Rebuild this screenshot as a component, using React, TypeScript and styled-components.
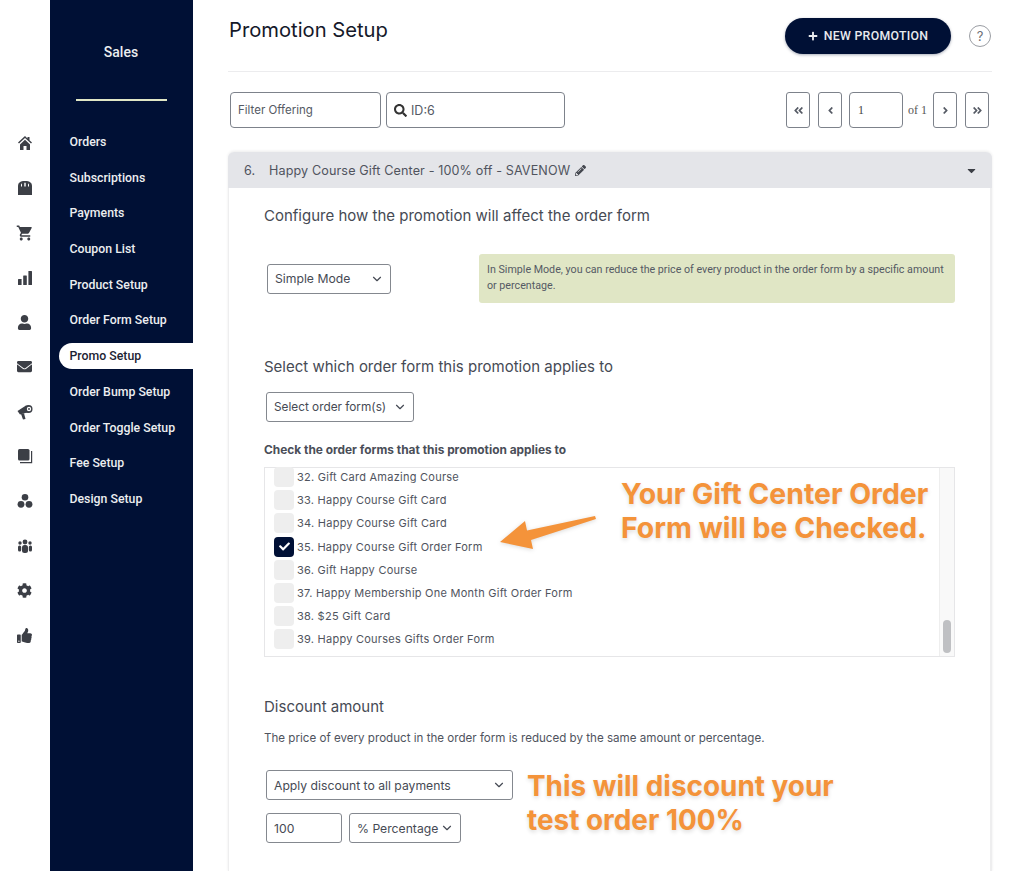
import React from 'react';
import styled, { createGlobalStyle } from 'styled-components';
import {
  FaAngleDoubleLeft,
  FaAngleDoubleRight,
  FaAngleLeft,
  FaAngleRight,
  FaCaretDown,
  FaCheck,
  FaCog,
  FaEnvelope,
  FaPencilAlt,
  FaPlus,
  FaSearch,
  FaThumbsUp,
  FaUser,
} from 'react-icons/fa';
import { MdShoppingCart } from 'react-icons/md';
import { ChevronDown } from 'lucide-react';

const GlobalStyle = createGlobalStyle`
  html, body {
    margin: 0;
    padding: 0;
    height: 871px;
    overflow: hidden;
    background: #fff;
    font-family: Inter, "Liberation Sans", sans-serif;
    color: #3f4450;
  }
  * { box-sizing: border-box; }
`;

const Page = styled.div`
  display: flex;
  width: 1024px;
  height: 871px;
  overflow: hidden;
`;

const Rail = styled.nav`
  width: 49.5px;
  flex: none;
  padding-top: 132px;
  display: flex;
  flex-direction: column;
  align-items: center;
  color: #3c3f46;
`;

const RailIcon = styled.div`
  height: 44.72px;
  width: 100%;
  padding-bottom: 22px;
  display: flex;
  align-items: center;
  justify-content: center;
  font-size: 15px;
`;

const Sidebar = styled.aside`
  width: 143px;
  flex: none;
  background: #001035;
  color: #eceef0;
  font-family: Roboto, "Liberation Sans", sans-serif;
`;

const SidebarTitle = styled.div`
  height: 101px;
  margin: 0 26px 0 26px;
  padding-top: 44px;
  text-align: center;
  font-size: 14px;
  line-height: 17px;
  font-weight: 500;
  border-bottom: 2px solid #e0e6c5;
`;

const SideList = styled.ul`
  list-style: none;
  margin: 28px 0 0;
  padding: 0;
`;

const SideItem = styled.li<{ $active?: boolean }>`
  height: 26px;
  margin: 0 0 9.7px 9px;
  padding-left: 11px;
  display: flex;
  align-items: center;
  font-size: 12.3px;
  font-weight: 500;
  border-radius: 13px 0 0 13px;
  background: ${(p) => (p.$active ? '#fff' : 'transparent')};
  color: ${(p) => (p.$active ? '#1c2333' : '#eceef0')};
`;

const Main = styled.main`
  width: 764px;
  margin-left: 35.5px;
  flex: none;
`;

const TopBar = styled.header`
  height: 72px;
  padding-top: 18px;
  display: flex;
  align-items: flex-start;
  justify-content: space-between;
  border-bottom: 1px solid #ececee;
`;

const Title = styled.h1`
  margin: 0 0 0 1px;
  font-size: 20.2px;
  line-height: 24px;
  font-weight: 400;
  color: #15192a;
`;

const TopActions = styled.div`
  display: flex;
  align-items: center;
  gap: 18px;
`;

const NewButton = styled.button`
  width: 166px;
  height: 36px;
  border: 0;
  border-radius: 18px;
  background: #001035;
  color: #e8eaee;
  display: flex;
  align-items: center;
  justify-content: center;
  gap: 6px;
  font-family: Roboto, "Liberation Sans", sans-serif;
  font-size: 12.3px;
  font-weight: 500;
  letter-spacing: 0.3px;
  box-shadow: 0 1px 3px rgba(0, 16, 53, 0.35);
`;

const HelpCircle = styled.div`
  width: 22px;
  height: 22px;
  margin-right: 1px;
  border: 1px solid #9a9da3;
  border-radius: 50%;
  display: flex;
  align-items: center;
  justify-content: center;
  font-size: 13px;
  color: #6d7076;
`;

const Toolbar = styled.div`
  margin-top: 20px;
  padding: 0 3px 0 2px;
  height: 36px;
  display: flex;
  justify-content: space-between;
`;

const FilterGroup = styled.div`
  display: flex;
  gap: 5px;
`;

const Field = styled.div<{ $width: number; $size?: number }>`
  width: ${(p) => p.$width}px;
  height: 36px;
  padding: 0 7px;
  display: flex;
  align-items: center;
  gap: 4px;
  border: 1px solid #7d828b;
  border-radius: 4px;
  font-size: ${(p) => p.$size ?? 11.5}px;
  color: #555a64;
`;

const Pager = styled.div`
  display: flex;
  align-items: center;
`;

const PageButton = styled.div<{ $gap?: number }>`
  width: 24px;
  height: 36px;
  margin-right: ${(p) => p.$gap ?? 0}px;
  border: 1px solid #7d828b;
  border-radius: 3px;
  display: flex;
  align-items: center;
  justify-content: center;
  font-size: 11px;
  color: #555a64;
`;

const PageInput = styled.div`
  width: 54px;
  height: 36px;
  padding-left: 8px;
  border: 1px solid #7d828b;
  border-radius: 4px;
  display: flex;
  align-items: center;
  font-family: "Liberation Serif", serif;
  font-size: 12px;
  color: #444;
`;

const PageOf = styled.span`
  width: 30px;
  padding-left: 5px;
  font-family: "Liberation Serif", serif;
  font-size: 12px;
  color: #555;
`;

const Card = styled.section`
  margin-top: 24px;
  height: 720px;
  border-radius: 6px 6px 0 0;
  border-left: 1px solid #eeeeef;
  border-right: 2px solid #eeeeef;
  box-shadow: 0 -1px 3px rgba(0, 0, 0, 0.08);
`;

const CardHead = styled.div`
  height: 36px;
  margin: 0 -2px 0 -1px;
  padding: 0 14px 0 16px;
  display: flex;
  align-items: center;
  background: #e4e5e9;
  border-radius: 6px 6px 0 0;
  font-size: 12.6px;
  color: #50545e;
`;

const CardNumber = styled.span`
  width: 25px;
`;

const CardName = styled.span`
  flex: 1;
  display: flex;
  align-items: center;
  gap: 5px;
  letter-spacing: 0.12px;
`;

const CardBody = styled.div`
  padding: 18px 35px 0 35px;
`;

const SectionTitle = styled.h2<{ $top?: number }>`
  margin: ${(p) => p.$top ?? 0}px 0 0;
  font-size: 15px;
  line-height: 20px;
  font-weight: 400;
  color: #464a54;
`;

const ModeRow = styled.div`
  margin-top: 28px;
  height: 49px;
  display: flex;
  align-items: center;
`;

const SelectBox = styled.div<{ $width: number; $left?: number; $top?: number; $size?: number }>`
  width: ${(p) => p.$width}px;
  height: 30px;
  margin: ${(p) => p.$top ?? 0}px 0 0 ${(p) => p.$left ?? 0}px;
  padding: 0 6px 0 7px;
  flex: none;
  display: flex;
  align-items: center;
  justify-content: space-between;
  background: #fff;
  border: 1px solid #84888f;
  border-radius: 3px;
  font-size: ${(p) => p.$size ?? 12.2}px;
  color: #464a54;
`;

const Note = styled.div`
  width: 476px;
  height: 49px;
  margin-left: 88px;
  padding: 8px 8px;
  background: #e0e6c5;
  border-radius: 3px;
  font-family: Roboto, "Liberation Sans", sans-serif;
  font-size: 10.7px;
  line-height: 16px;
  color: #555a64;
`;

const ListLabel = styled.div`
  margin-top: 21px;
  font-size: 11.9px;
  line-height: 14px;
  font-weight: 700;
  color: #4a4e58;
`;

const ListFrame = styled.div`
  position: relative;
  margin-top: 10px;
  height: 190px;
  display: flex;
  border: 1px solid #e6e6e8;
`;

const Rows = styled.div`
  flex: 1;
  margin-top: -2.5px;
  padding-left: 9px;
  display: grid;
  grid-auto-rows: 23.2px;
  overflow: hidden;
`;

const Row = styled.label`
  display: flex;
  align-items: center;
  gap: 3px;
  font-size: 11px;
  letter-spacing: 0.25px;
  color: #50545e;
`;

const Check = styled.span<{ $on?: boolean }>`
  width: 20px;
  height: 20px;
  flex: none;
  display: flex;
  align-items: center;
  justify-content: center;
  border-radius: 4px;
  background: ${(p) => (p.$on ? '#001035' : '#eeeeee')};
  color: #fff;
  font-size: 11px;
`;

const ScrollTrack = styled.div`
  width: 15px;
  flex: none;
  padding: 0 3px 3px;
  display: flex;
  align-items: flex-end;
  background: #f9f9f9;
  border-left: 1px solid #eeeeee;
`;

const ScrollThumb = styled.div`
  width: 8px;
  height: 33px;
  border-radius: 4px;
  background: #bfc0c3;
`;

const Callout = styled.div<{ $size: number }>`
  font-size: ${(p) => p.$size}px;
  line-height: 34px;
  font-weight: 700;
  color: #f4933a;
  text-shadow: 0 2px 4px rgba(0, 0, 0, 0.14);
`;

const ListCallout = styled(Callout)`
  position: absolute;
  left: 356px;
  top: 9px;
`;

const DiscountCallout = styled(Callout)`
  margin-top: -1px;
`;

const Arrow = styled.svg`
  position: absolute;
  left: 234px;
  top: 45px;
  width: 100px;
  height: 40px;
  overflow: visible;
  filter: drop-shadow(0 1px 2px rgba(0, 0, 0, 0.15));
`;

const Hint = styled.p`
  margin: 13px 0 0;
  font-size: 11.6px;
  line-height: 16px;
  color: #50545e;
`;

const DiscountRow = styled.div`
  margin-top: 24px;
  display: flex;
  align-items: flex-start;
  gap: 14px;
`;

const DiscountControls = styled.div`
  width: 249px;
  flex: none;
`;

const AmountRow = styled.div`
  margin: 13px 0 0 2px;
  display: flex;
  gap: 7px;
`;

const AmountInput = styled.div`
  width: 76px;
  height: 30px;
  padding-left: 7px;
  display: flex;
  align-items: center;
  border: 1px solid #84888f;
  border-radius: 3px;
  font-size: 12.2px;
  color: #464a54;
`;

const HomeIcon = () => (
  <svg width="16" height="16" viewBox="0 0 16 16" fill="currentColor">
    <path d="M8 1 1 7.500 2 8.500 8 3l6 5.500 1-1-2.500-2.300V2h-2v1.400z" />
    <path d="M3 9.500 8 4.800l5 4.700V15H9.500v-4h-3v4H3z" />
  </svg>
);

const StoreIcon = () => (
  <svg width="16" height="16" viewBox="0 0 16 16" fill="currentColor">
    <path d="M1 15V6c0-3 2-5 7-5s7 2 7 5v9z" />
    <path d="M4 6.500V4.500l1-1.300v3.300zM7.300 6.500V2.800h1.400v3.700zM11 6.500V3.200l1 1.300v2z" fill="#fff" />
  </svg>
);

const BarsIcon = () => (
  <svg width="16" height="16" viewBox="0 0 16 16" fill="currentColor">
    <rect x="1" y="9" width="3.600" height="6" rx="0.500" />
    <rect x="6.200" y="5.500" width="3.600" height="9.500" rx="0.500" />
    <rect x="11.400" y="1" width="3.600" height="14" rx="0.500" />
  </svg>
);

const HornIcon = () => (
  <svg width="16" height="16" viewBox="0 0 16 16" fill="currentColor">
    <path d="M.5 7 9 1.500l3 6.500-9 2.500z" />
    <path d="M4 10l3-.700L8.500 15 6 15.500z" />
    <circle cx="11.500" cy="5" r="4" />
    <circle cx="12" cy="5" r="2.200" fill="#fff" />
    <circle cx="12" cy="5" r="0.900" />
  </svg>
);

const BookIcon = () => (
  <svg width="16" height="16" viewBox="0 0 16 16" fill="currentColor">
    <rect x="1" y="1" width="11.500" height="11.500" rx="1.500" />
    <path d="M14 3h1.200v12.200H3V14h11z" />
  </svg>
);

const CirclesIcon = () => (
  <svg width="16" height="16" viewBox="0 0 16 16" fill="currentColor">
    <circle cx="8" cy="4.300" r="3.300" />
    <circle cx="4" cy="11.300" r="3.400" />
    <circle cx="12" cy="11.300" r="3.400" />
  </svg>
);

const TeamIcon = () => (
  <svg width="16" height="16" viewBox="0 0 16 16" fill="currentColor">
    <circle cx="8" cy="4" r="2.400" />
    <rect x="5" y="7" width="6" height="8" rx="2.500" />
    <circle cx="3" cy="5" r="1.700" />
    <rect x="1" y="7.500" width="3.200" height="6" rx="1.500" />
    <circle cx="13" cy="5" r="1.700" />
    <rect x="11.800" y="7.500" width="3.200" height="6" rx="1.500" />
  </svg>
);

const railIcons = [
  <HomeIcon key="home" />,
  <StoreIcon key="store" />,
  <MdShoppingCart key="cart" size={18} />,
  <BarsIcon key="stats" />,
  <FaUser key="user" />,
  <FaEnvelope key="mail" />,
  <HornIcon key="horn" />,
  <BookIcon key="book" />,
  <CirclesIcon key="circles" />,
  <TeamIcon key="team" />,
  <FaCog key="cog" />,
  <FaThumbsUp key="thumb" />,
];

const sideItems = [
  'Orders',
  'Subscriptions',
  'Payments',
  'Coupon List',
  'Product Setup',
  'Order Form Setup',
  'Promo Setup',
  'Order Bump Setup',
  'Order Toggle Setup',
  'Fee Setup',
  'Design Setup',
];

const orderForms = [
  '32. Gift Card Amazing Course',
  '33. Happy Course Gift Card',
  '34. Happy Course Gift Card',
  '35. Happy Course Gift Order Form',
  '36. Gift Happy Course',
  '37. Happy Membership One Month Gift Order Form',
  '38. $25 Gift Card',
  '39. Happy Courses Gifts Order Form',
];

function App() {
  return (
    <Page>
      <GlobalStyle />
      <Rail>
        {railIcons.map((icon) => (
          <RailIcon key={icon.key}>{icon}</RailIcon>
        ))}
      </Rail>

      <Sidebar>
        <SidebarTitle>Sales</SidebarTitle>
        <SideList>
          {sideItems.map((item) => (
            <SideItem key={item} $active={item === 'Promo Setup'}>
              {item}
            </SideItem>
          ))}
        </SideList>
      </Sidebar>

      <Main>
        <TopBar>
          <Title>Promotion Setup</Title>
          <TopActions>
            <NewButton>
              <FaPlus size={10} /> NEW PROMOTION
            </NewButton>
            <HelpCircle>?</HelpCircle>
          </TopActions>
        </TopBar>

        <Toolbar>
          <FilterGroup>
            <Field $width={151}>Filter Offering</Field>
            <Field $width={179} $size={12.5}>
              <FaSearch size={13} color="#333" /> ID:6
            </Field>
          </FilterGroup>
          <Pager>
            <PageButton $gap={8}>
              <FaAngleDoubleLeft />
            </PageButton>
            <PageButton $gap={7}>
              <FaAngleLeft />
            </PageButton>
            <PageInput>1</PageInput>
            <PageOf>of 1</PageOf>
            <PageButton $gap={8}>
              <FaAngleRight />
            </PageButton>
            <PageButton>
              <FaAngleDoubleRight />
            </PageButton>
          </Pager>
        </Toolbar>

        <Card>
          <CardHead>
            <CardNumber>6.</CardNumber>
            <CardName>
              Happy Course Gift Center - 100% off - SAVENOW <FaPencilAlt size={11} color="#44474f" />
            </CardName>
            <FaCaretDown size={13} color="#3c3f46" />
          </CardHead>

          <CardBody>
            <SectionTitle>Configure how the promotion will affect the order form</SectionTitle>
            <ModeRow>
              <SelectBox $width={124} $left={3}>
                Simple Mode <ChevronDown size={14} />
              </SelectBox>
              <Note>
                In Simple Mode, you can reduce the price of every product in the order form by a specific amount or
                percentage.
              </Note>
            </ModeRow>

            <SectionTitle $top={54}>Select which order form this promotion applies to</SectionTitle>
            <SelectBox $width={148} $left={2} $top={15} $size={11.8}>
              Select order form(s) <ChevronDown size={14} />
            </SelectBox>

            <ListLabel>Check the order forms that this promotion applies to</ListLabel>
            <ListFrame>
              <Rows>
                {orderForms.map((form) => (
                  <Row key={form}>
                    <Check $on={form.startsWith('35.')}>{form.startsWith('35.') && <FaCheck />}</Check>
                    {form}
                  </Row>
                ))}
              </Rows>
              <ScrollTrack>
                <ScrollThumb />
              </ScrollTrack>
              <Arrow viewBox="0 0 100 40">
                <polygon points="1,29 26,8 28,17.500 96,3 97,6 32,27 34,36" fill="#f4933a" />
              </Arrow>
              <ListCallout $size={28.4}>
                Your Gift Center Order
                <br />
                Form will be Checked.
              </ListCallout>
            </ListFrame>

            <SectionTitle $top={40}>Discount amount</SectionTitle>
            <Hint>The price of every product in the order form is reduced by the same amount or percentage.</Hint>
            <DiscountRow>
              <DiscountControls>
                <SelectBox $width={247} $left={2}>
                  Apply discount to all payments <ChevronDown size={14} />
                </SelectBox>
                <AmountRow>
                  <AmountInput>100</AmountInput>
                  <SelectBox $width={112}>
                    % Percentage <ChevronDown size={14} />
                  </SelectBox>
                </AmountRow>
              </DiscountControls>
              <DiscountCallout $size={27.9}>
                This will discount your
                <br />
                test order 100%
              </DiscountCallout>
            </DiscountRow>
          </CardBody>
        </Card>
      </Main>
    </Page>
  );
}

export default App;
